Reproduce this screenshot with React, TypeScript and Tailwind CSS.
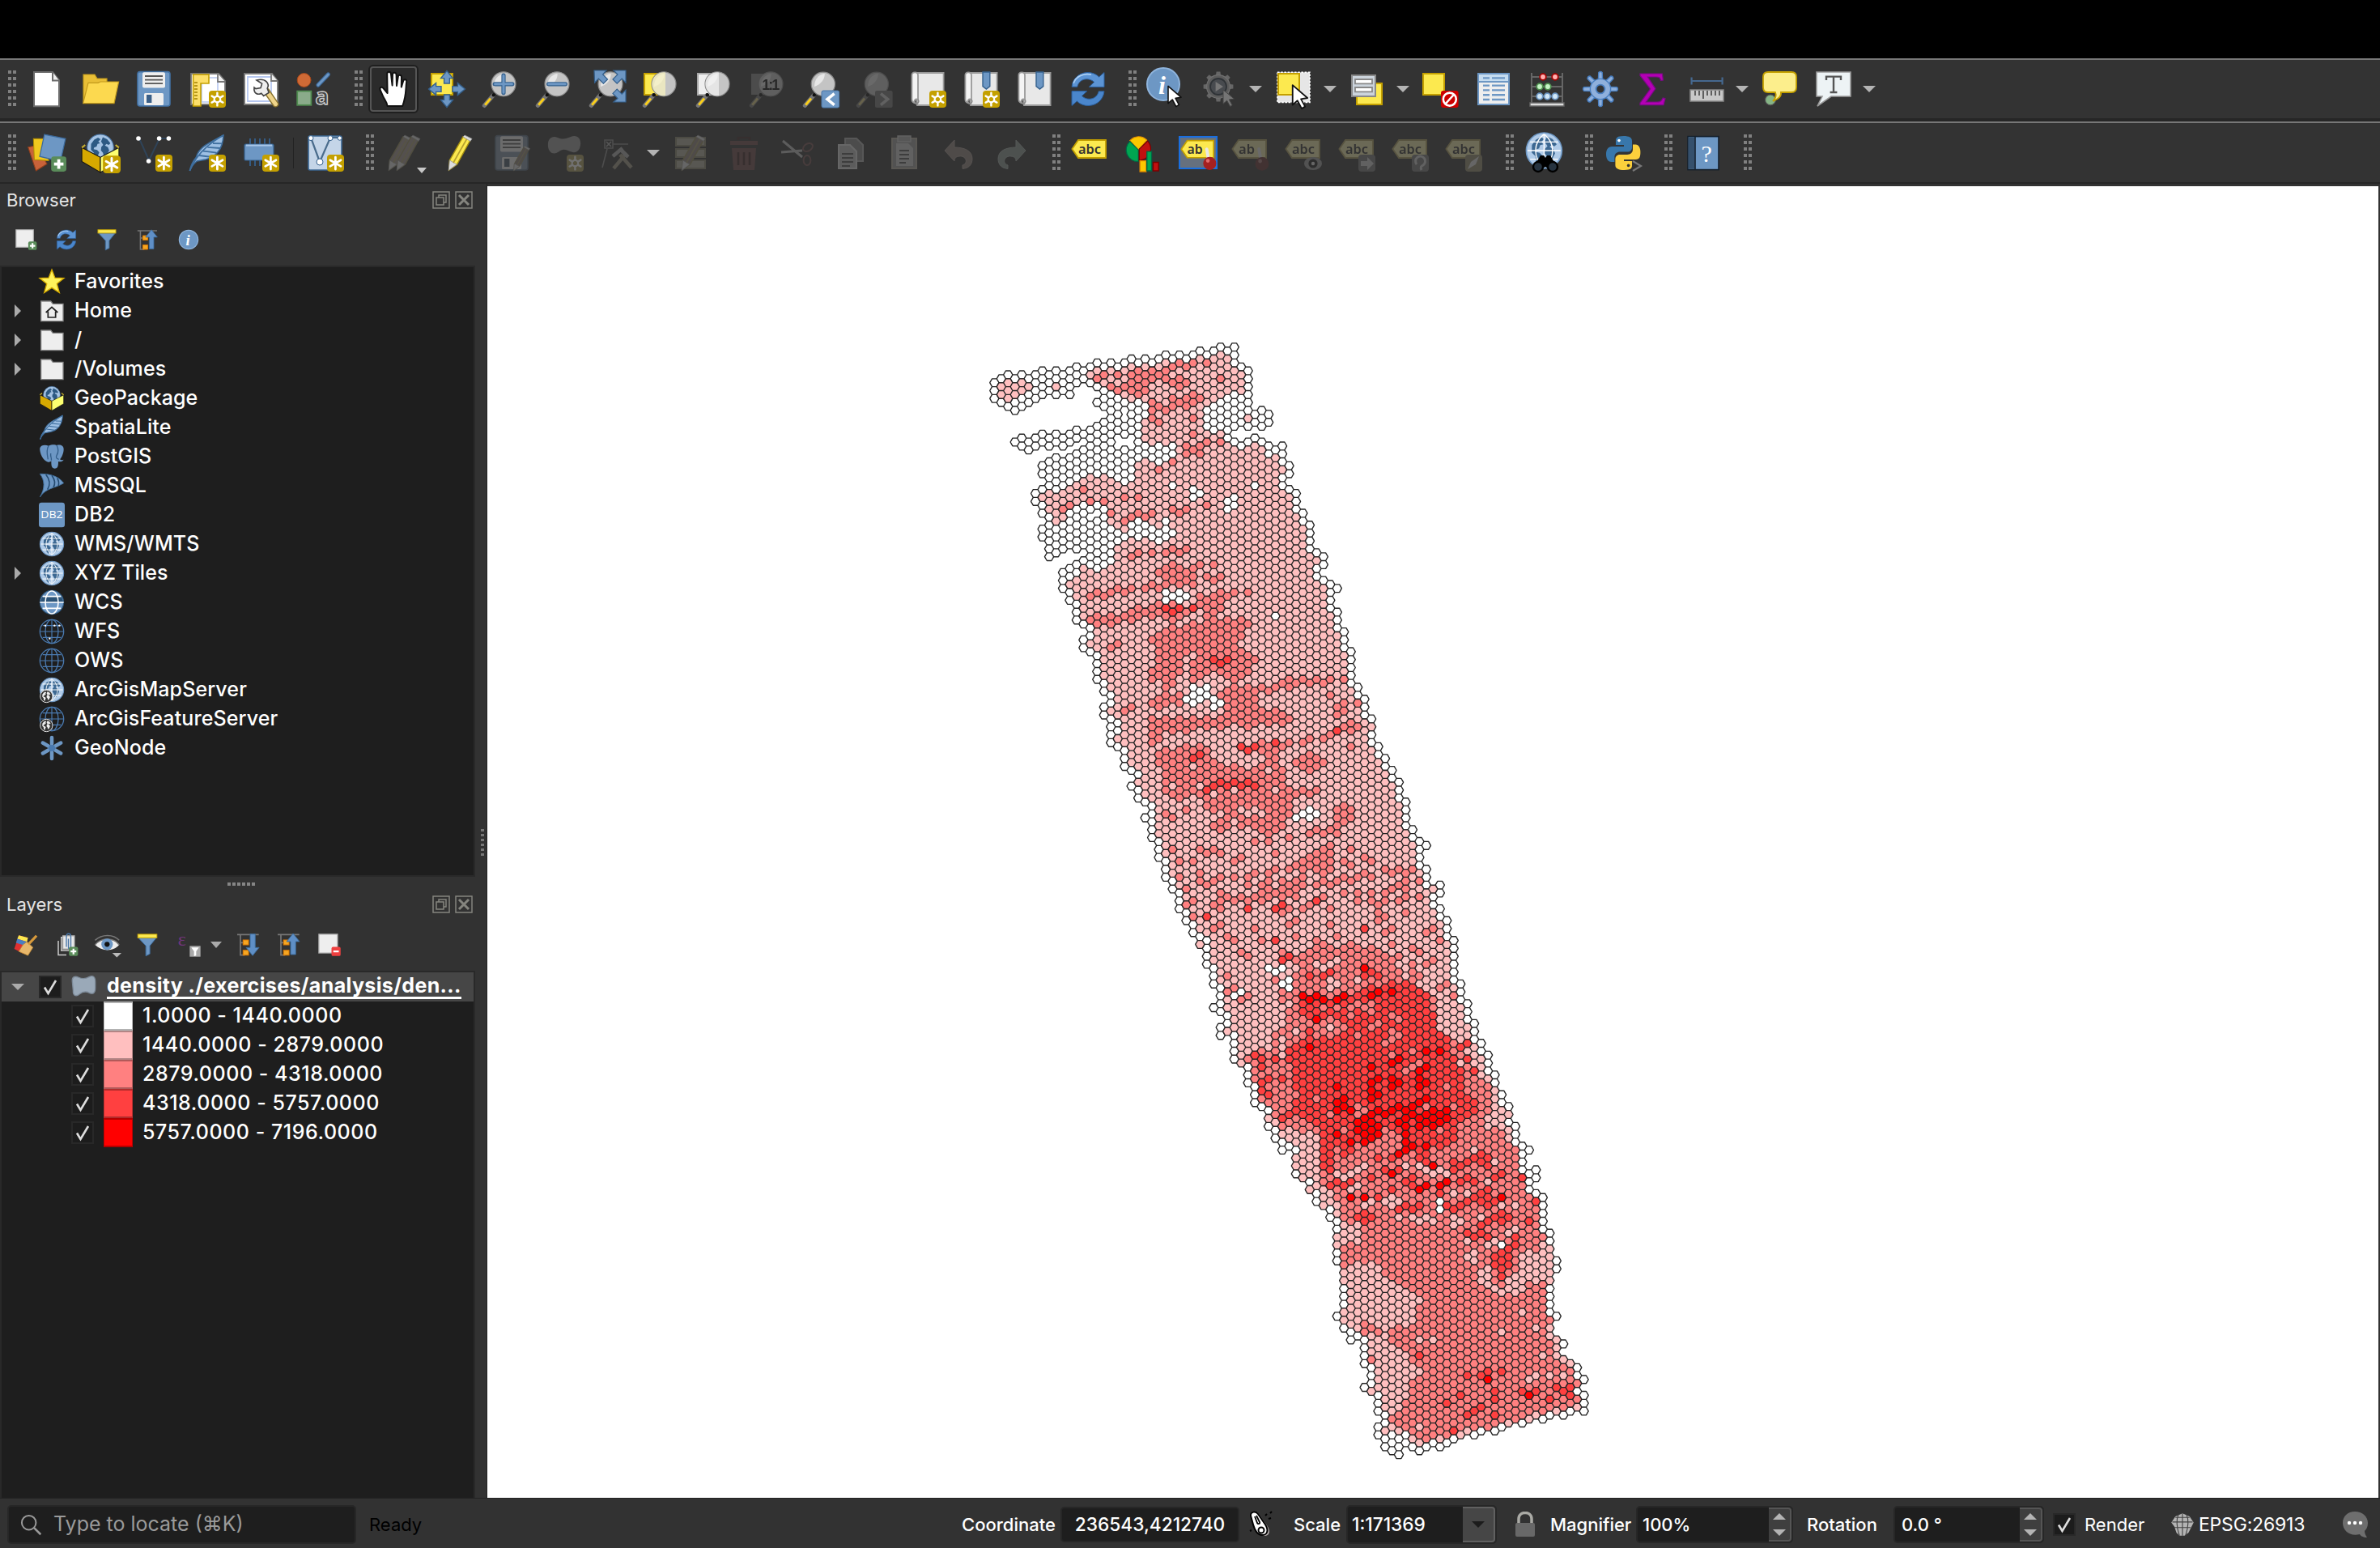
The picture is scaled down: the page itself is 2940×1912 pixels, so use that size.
import React from "react";

/* ------------------------------------------------------------------ */
/* Hexagon density layer                                               */
/* ------------------------------------------------------------------ */

const DX = 8.468;
const DY = 9.771;
const X0 = 1228.33;
const Y0 = 472.7;

type Pt = [number, number];
type Tile = "A" | "B" | "C" | "D";
const ORIGIN: Record<Tile, Pt> = { A: [1200, 400], B: [1300, 850], C: [1480, 1180], D: [1600, 1480] };

const toPage = (t: Tile, x: number, y: number): Pt => [ORIGIN[t][0] + x / 3, ORIGIN[t][1] + y / 3];

/** "x,y x,y" -> page points */
const poly = (t: Tile, s: string): Pt[] =>
  s.trim().split(/\s+/).map((p) => {
    const [x, y] = p.split(",").map(Number);
    return toPage(t, x, y);
  });

const OUTLINE: Pt[] = [
  ...poly("A", `85,218 110,203 138,188 163,203 188,188 213,203 239,188 264,172 290,187 315,172 340,187 365,172 391,157 416,172 442,157 467,143 493,157 518,143 544,157 569,143 594,128 620,143 645,128 670,143 696,128 721,113 747,128 772,113 798,128 823,113 848,99 874,113 899,99 925,84 950,99 975,84 975,113 1001,158 1027,172 1027,290 1052,335 1078,319 1103,334 1103,363 1078,378 1052,363 1027,378 1001,363 975,378 950,393 950,408 975,437 1001,452 1027,437 1052,423 1078,437 1103,452 1128,467 1153,452 1153,481 1153,510 1180,525 1180,554 1155,570 1180,613 1206,628 1206,686 1231,701 1256,745 1256,803 1282,847 1307,862 1307,891 1282,906 1282,935 1307,950 1332,965 1357,979 1332,994 1332,1052 1357,1067 1357,1096 1383,1140 1383,1169 1408,1213 1408,1300`),
  ...poly("B", `1134,-4 1134,25 1159,40 1159,98 1184,113 1184,172 1210,216 1235,260 1235,289 1260,304 1260,333 1286,348 1286,377 1311,421 1311,509 1336,524 1336,553 1361,567 1387,582 1361,597 1361,655 1387,670 1387,699 1412,743 1438,729 1438,758 1412,773 1412,820 1438,817 1438,846 1463,861 1463,919 1488,934`),
  ...poly("C", `948,0 948,60 948,91 974,105 974,163 1000,178 1000,236 1025,251 1025,281 1050,325 1050,354 1076,369 1076,398 1101,442 1101,471 1127,516 1152,560 1152,618 1178,633 1178,691 1203,706 1228,721 1203,735 1203,765 1228,809 1253,794 1253,823 1228,838 1228,867 1253,882 1279,896 1279,1015`),
  ...poly("D", `944,129 944,217 970,232 970,261 944,276 944,421 970,436 944,451 944,510 970,524 995,539 970,554 970,583 995,598 1020,612 1046,627 1046,656 1071,671 1046,686 1046,715 1071,729 1071,788 1046,773 1020,788 995,803 970,788 944,803 919,818 893,803 868,818 843,832 817,818 792,832 767,847 741,862 716,847 690,862 665,876 640,862 614,876 589,891 563,906 538,920 512,906 487,920 461,935 436,920 410,906 384,950 359,935 334,920 334,891 308,876 308,847 334,832 334,803 308,788 308,730 283,715 258,700 283,686 283,627 258,612 258,524 232,510 207,524 207,495 181,480 181,451 156,436 181,421 181,246 156,231 156,114 156,85 130,70`),
  ...poly("C", `500,950 490,941 465,926 440,911 440,882 414,867 414,838 389,823 364,809 364,750 339,706 313,721 313,691 288,677 262,633 262,574 237,560 211,545 211,486 186,471 186,413 160,398 135,384 135,296 110,281 85,296 85,267 110,252 110,222 84,208 59,193 85,178 85,120 59,105 59,47 33,32`),
  ...poly("B", `573,964 548,949 548,920 522,905 548,890 522,875 497,861 497,832 472,817 472,788 497,773 447,744 447,714 421,699 421,641 396,626 396,597 371,553 371,494 345,480 371,465 345,421 320,406 320,377 294,362 320,348 294,304 269,289 269,230 243,216 218,201 218,113 192,98 192,69 218,54 192,11`),
  ...poly("A", `492,1330 467,1315 467,1227 442,1213 416,1198 416,1169 442,1155 442,1125 416,1111 391,1096 391,1037 365,1023 365,994 340,979 340,920 365,906 391,891 416,876 442,862 416,830 391,832 365,818 340,832 315,847 290,862 290,803 264,788 264,759 290,744 290,715 264,701 239,657 239,628 264,613 290,598 264,554 264,525 290,510 315,495 340,505 365,495 391,481 416,467 442,452 416,435 391,437 340,452 315,437 290,452 264,437 239,452 213,467 188,452 163,437 188,423 213,437 239,423 264,408 290,423 315,408 340,423 365,408 391,393 416,408 442,393 467,378 493,363 518,349 493,305 467,291 493,276 467,232 442,218 416,203 391,218 365,262 340,247 315,262 290,247 264,262 239,276 213,291 188,305 163,319 138,305 110,291 85,276`),
];

/** [tile, level, polygon] painted in order over level 1 */
const AREAS: [Tile, number, string][] = [
  ["A", 0, "60,160 428,130 430,230 400,320 60,340"],
  ["A", 0, "430,225 467,225 500,240 540,262 590,285 652,292 655,330 630,350 628,400 620,430 650,440 680,448 755,430 755,490 700,520 640,510 604,530 600,575 570,595 540,580 500,575 467,555 400,585 330,622 230,600 230,480 140,480 140,400 420,380"],
  ["A", 0, "380,690 416,660 450,690 490,680 500,730 520,750 560,770 590,745 620,720 650,735 670,745 720,755 720,715 760,770 710,815 640,790 600,790 550,800 530,825 530,885 480,925 430,920 320,960 320,880 280,880 240,780 250,745 330,740 350,710"],
  ["A", 0, "838,315 900,285 1000,250 1120,300 1120,400 870,400 860,345"],
  ["A", 2, "455,215 480,175 505,180 505,195 470,215"],
  ["A", 2, "560,215 600,170 735,165 735,195 810,205 810,235 740,245 700,215 650,240 635,270 600,255 540,250 505,230 560,235"],
  ["A", 2, "860,1090 950,1080 1040,1095 1010,1160 975,1190 1060,1230 1030,1310 950,1330 900,1300 820,1330 780,1250 770,1300 760,1380 700,1330 640,1310 690,1270 680,1180 640,1160 720,1120 830,1110"],
  ["A", 2, "910,1350 1110,1335 1180,1315 1400,1305 1400,1330 1260,1335 1100,1372 1040,1400 910,1400"],
  ["B", 2, "340,70 400,30 440,0 490,20 490,60 400,80"],
  ["B", 2, "610,0 770,0 770,60 880,100 880,120 820,140 700,145 640,140 560,170 430,165 370,210 360,150 420,100 560,110 640,90"],
  ["B", 2, "360,270 400,230 480,215 570,215 620,280 780,290 770,180 860,190 840,290 870,320 870,365 980,370 1000,390 930,405 890,390 880,480 850,525 800,575 770,530 640,510 650,550 580,530 630,470 570,440 560,390 480,415 420,400 410,300"],
  ["B", 2, "860,280 930,240 1010,240 1010,300 930,315"],
  ["B", 2, "860,205 960,180 1040,165 1110,110 1145,150 1060,175 970,195 870,215"],
  ["B", 2, "1020,450 1130,420 1110,500 1060,540 940,545 960,520 1060,490"],
  ["B", 2, "390,495 430,455 450,485"],
  ["B", 2, "1045,70 1090,50 1090,80 1050,110"],
  ["B", 2, "590,690 700,690 840,665 840,690 690,705 600,725"],
  ["B", 2, "870,670 1040,570 1040,640 1000,670 870,690"],
  ["B", 2, "800,740 930,720 1130,690 1130,715 960,740 860,780 760,790 730,760"],
  ["B", 2, "540,800 600,780 720,760 720,790 600,810"],
  ["B", 2, "880,1000 950,960 1120,960 1320,990 1340,1080 1500,1150 1500,1300 1500,1500 820,1440 760,1360 900,1200"],
  ["C", 2, "300,150 360,130 380,60 600,20 800,60 950,150 960,250 1010,400 1110,520 1200,740 1270,900 1290,1050 500,1050 450,830 300,640 200,480 170,390 230,350 350,290"],
  ["C", 1, "880,70 960,190 1040,300 1040,400 960,330 900,250 860,160 800,80"],
  ["C", 1, "300,640 450,660 450,830 540,930 540,1020 480,1020 360,820"],
  ["C", 1, "1090,480 1160,560 1180,690 1130,700 1120,600 1080,640 1040,650 1070,610"],
  ["C", 3, "320,350 440,300 520,295 600,280 560,250 500,250 480,225 430,240 380,225 370,150 480,160 580,140 720,95 840,110 870,200 900,300 960,390 990,480 1000,530 1030,540 1030,610 960,620 950,690 860,720 880,780 780,760 800,730 760,680 690,640 680,690 590,700 540,750 520,700 500,770 450,780 450,640 380,590 290,610 330,580 380,510 330,460 380,430 330,380"],
  ["D", 2, "170,60 900,20 940,520 1060,640 1080,780 480,900 420,880 340,820 260,550 150,260"],
  ["D", 1, "160,90 235,95 240,165 170,165"],
  ["D", 1, "210,240 330,235 330,280 390,310 400,325 440,340 475,385 440,400 440,460 340,490 290,460 185,420 185,280"],
  ["D", 1, "180,440 240,440 240,510 180,500"],
  ["D", 1, "270,500 335,500 340,530 400,560 430,610 475,630 430,680 400,780 340,810 320,740 290,720 290,620"],
  ["D", 1, "825,200 920,195 930,300 860,310 850,345 810,365 690,345 680,250 705,240 730,280 730,330 760,330 820,280"],
  ["D", 0, "320,860 410,870 410,920 384,960 300,900 300,830"],
];

const DOTS: [Tile, number, string][] = [
  ["A", 1, "110,232-262 138,218-276 163,232-262 188,218-247 213,203-232 315,232 1001,363 1027,349 1052,363 823,1228 798,1257-1300 416,906 670,437 645,423 696,745 645,803 594,803"],
  ["A", 2, "544,188 747,158 772,145 798,158 823,145 874,145 925,203 670,291-350 696,305 696,363 721,320 747,276-305 772,291 798,276-300 823,262-290 848,276 823,350 823,408 874,437 925,437 848,452-481 823,467 798,452-481 747,510 696,540 416,613 442,657 493,657 569,642 620,642 365,672 340,686 518,700 569,730 594,715 620,700 645,715 670,700 747,686 772,700 798,686 874,672 594,862 620,847 670,847 721,847 747,832 772,847 798,832 747,891-965 721,906-965 696,920 772,906-965 798,920-950 823,906 848,891 899,891 823,935-965 874,935 899,950 925,935 696,979 670,965 645,979 594,979 569,994 544,979 518,994 493,1008 467,994 442,1008 848,1008-1052 874,1023-1081 899,1008-1081 925,994-1052 950,1008 975,994 1027,994 442,1096 467,1081-1111 493,1096 518,1081-1111 544,1096 569,1081 594,1067-1096 620,1052-1081 645,1067 670,1052-1081 696,1037-1067 721,1081 747,1096 772,1081 798,1067 747,1037 518,1198 544,1184"],
  ["A", 3, "721,1052 747,1067 772,1052 823,1052 899,1242 925,1257 950,1242"],
  ["A", 0, "721,994 747,1008 772,994 798,1008 721,1023 772,1023 1128,1081 747,598 823,613 823,642 848,628 1052,598 975,642 975,672 950,657 950,686 823,1345 848,1359 874,1345 1078,452 1103,481 1128,481 1001,276-305 721,730 721,759 747,774 1282,906 1256,774"],
  ["B", 1, "752,157 802,157 827,172 624,260 650,275 675,260 701,275 726,289 752,245-275 701,450 776,465 726,465 599,216 650,187 548,187 497,187 802,304"],
  ["B", 2, "269,84 294,69 371,113 1032,25 1108,216 752,567 548,597 573,612 599,597 879,553 1159,626 1083,641 1184,700 1260,685 1286,670 1336,670 1311,743 1184,758 1235,758 548,714 523,729 827,670 497,450 1134,54"],
  ["B", 3, "1057,157 701,216 726,231 752,216 827,201 523,260 548,245 573,377 599,362 624,348 650,362 675,348 701,362 726,348 752,362 574,846 726,817 827,817 852,802 979,788 1159,890 827,934 852,1007 879,993"],
  ["B", 0, "497,40 523,25 523,54 548,11 548,40 573,25 599,40 599,69 624,54 903,480 929,465 954,450 954,480 979,465 802,1037 827,1052 852,1037 852,1096 879,1081 879,1110 675,1140 701,1125 574,935 218,25 243,128 243,157"],
  ["C", 2, "720,369 770,428 796,413 796,354 694,677-706 720,677-706 720,296-325 490,589 516,193 465,193 643,178-207 643,266 592,178 567,193 898,648 923,486 669,252 745,237 770,604 745,310"],
  ["C", 3, "465,779 490,765-794 516,838 490,853 541,853 567,838 643,823 669,750 720,867 770,838 796,853 618,955-985 592,970 643,970 745,941 770,941 796,941 821,926 923,926 948,941 974,926 1000,911 1025,897 1050,911 1076,897 1101,911 1127,956-985 1101,970 1152,970 1050,1000-1029 1076,985 1000,1029 1025,750 1050,735-765 1076,750 1000,765 948,765 974,779 948,794 974,838 1000,823 1025,838 1127,809 1101,823 237,384 288,384 415,76 465,76 490,62 618,76 643,62 669,76 1000,325 1000,384 974,340 313,604"],
  ["C", 4, "618,47 389,149 415,164 440,149 465,164 516,164 541,149 440,237 643,149 669,134 720,134 415,340 847,354 898,354 745,384 720,398 847,413 821,428 643,413 669,457 643,472-530 669,516 720,457-486 745,471 821,457-486 847,471 516,486 541,530 516,545-574 541,560 567,574 847,530 821,545 796,560 745,560 720,574 694,589 669,574 643,589 618,604 770,574-633 745,618 796,574-604 821,604-633 847,589-618 872,574-633 898,589-618 923,574-604 592,618-648 618,633-691 643,618-677 669,633-662 770,662-721 796,706 847,706 745,735 516,662 567,691 872,779 720,809 821,867 847,853 898,853 923,838 567,897 618,897 1127,897"],
  ["C", 1, "516,105 618,779 592,794 567,809 516,809 567,867 618,926 694,911 720,897-926 745,911 872,809 898,794 923,809 847,970 872,985 948,882 948,970-1000 974,985 1000,882 1025,721"],
  ["C", 0, "898,911-941"],
  ["D", 3, "639,129 665,144 690,100-129 716,85 716,144 741,70 767,55-85 792,70 817,144-173 792,188-246 767,202-290 741,217-246 461,583 639,656 690,656 716,642 767,642 614,730 741,715-744 690,773 665,788 639,803 741,803 563,759 589,862 843,715 893,715 970,700 995,715 1020,700-730 944,744"],
  ["D", 4, "716,671 868,730"],
  ["D", 1, "639,158 639,217 665,202-232 741,158 716,173 792,129 817,114 461,524 512,524 767,495 843,421 893,480 919,583 944,656 868,671 893,656 995,656 640,862 614,876 792,832 893,803 970,788 1046,773 461,847 461,906 436,891 334,862"],
  ["D", 0, "767,173"],
];

/** boundary cells that keep a colour instead of the sparse rim */
const RIM: [Tile, number, string][] = [
  ["B", 1, "548,949 522,729 1412,743 1184,143 320,348 345,450"],
  ["C", 1, "110,281 364,750-779 414,867 465,926 262,604 160,398 1101,501 1152,589 389,823"],
  ["D", 1, "156,143-173 181,276-305 181,421-451 207,466 283,715 944,188-217 944,276-305 944,480-510 970,524-583 995,598 1020,612 893,803 868,818 792,832 640,862 614,876 970,788 1046,773 461,906"],
  ["D", 2, "181,246 944,451 716,847 817,818 1046,744 1046,686"],
];

const MISSING = "569,321 569,350 569,438 544,423 544,452 594,423 594,452 442,716 467,702 416,437";

const key = (c: number, r: number) => c * 1000 + r;

function cellAt(px: number, py: number): Pt {
  const c = Math.round((px - X0) / DX);
  const off = Math.abs(c) % 2 ? DY / 2 : 0;
  return [c, Math.round((py - Y0 - off) / DY)];
}

function center(c: number, r: number): Pt {
  return [X0 + c * DX, Y0 + r * DY + (Math.abs(c) % 2 ? DY / 2 : 0)];
}

function inside(p: Pt, pg: Pt[]) {
  let hit = false;
  for (let i = 0, j = pg.length - 1; i < pg.length; j = i++) {
    const [xi, yi] = pg[i];
    const [xj, yj] = pg[j];
    if (yi > p[1] !== yj > p[1] && p[0] < ((xj - xi) * (p[1] - yi)) / (yj - yi) + xi) hit = !hit;
  }
  return hit;
}

function nearEdge(p: Pt, pg: Pt[], d: number) {
  for (let i = 0, j = pg.length - 1; i < pg.length; j = i++) {
    const [ax, ay] = pg[j];
    const [bx, by] = pg[i];
    const l = (bx - ax) ** 2 + (by - ay) ** 2 || 1;
    const t = Math.max(0, Math.min(1, ((p[0] - ax) * (bx - ax) + (p[1] - ay) * (by - ay)) / l));
    if (Math.hypot(p[0] - ax - t * (bx - ax), p[1] - ay - t * (by - ay)) < d) return true;
  }
  return false;
}

function eachDot(t: Tile, s: string, fn: (k: number) => void) {
  for (const item of s.trim().split(/\s+/)) {
    const [xs, ys] = item.split(",");
    const [a, b] = ys.split("-").map(Number);
    for (let y = a; y <= (b ?? a) + 6; y += 29.32) {
      const [px, py] = toPage(t, Number(xs), y);
      const [c, r] = cellAt(px, py);
      fn(key(c, r));
    }
  }
}

function noise(c: number, r: number) {
  const v = Math.sin(c * 12.9898 + r * 78.233) * 43758.5453;
  return v - Math.floor(v);
}

function buildLayer() {
  const cells = new Map<number, number>();
  for (let c = -1; c <= 88; c++) {
    for (let r = -8; r <= 137; r++) {
      const p = center(c, r);
      if (inside(p, OUTLINE) || nearEdge(p, OUTLINE, 1.8)) cells.set(key(c, r), 1);
    }
  }
  eachDot("A", MISSING, (k) => cells.delete(k));
  const areas = AREAS.map(([t, l, s]) => [l, poly(t, s)] as [number, Pt[]]);
  for (const k of cells.keys()) {
    const c = Math.round(k / 1000);
    const r = k - c * 1000;
    const p = center(c, r);
    let level = 1;
    for (const [l, pg] of areas) if (inside(p, pg)) level = l;
    const n = noise(c, r);
    const streak = Math.sin((p[1] + p[0] * 0.22) * 0.36 + Math.sin(p[0] * 0.05) * 1.4);
    if (p[1] > 1045 && p[1] < 1240 && level === 1 && n < 0.16 + 0.3 * streak) level = 2;
    if (p[1] > 1180 && p[1] < 1330 && level === 2 && n > 0.88) level = 1;
    if (p[1] > 1260 && p[1] < 1420 && level === 2 && n < 0.1) level = 3;
    if (p[1] > 1230 && p[1] < 1440 && level === 3 && n > 0.94) level = 2;
    if (p[1] > 1430 && p[1] < 1510 && level === 2) {
      if (n > 0.86) level = 1;
      else if (n < 0.08 + 0.12 * streak) level = 3;
    }
    if (p[1] > 850 && p[1] < 1040 && level === 2 && n > 0.94) level = 1;
    cells.set(k, level);
  }
  for (const [t, l, s] of DOTS) eachDot(t, s, (k) => cells.has(k) && cells.set(k, l));
  for (const k of [...cells.keys()]) {
    const c = Math.round(k / 1000);
    const r = k - c * 1000;
    const o = Math.abs(c) % 2 ? 0 : -1;
    const around = [[c, r - 1], [c, r + 1], [c - 1, r + o], [c - 1, r + o + 1], [c + 1, r + o], [c + 1, r + o + 1]];
    if (around.some(([a, b]) => !cells.has(key(a, b)))) cells.set(k, 0);
  }
  for (const [t, l, s] of RIM) eachDot(t, s, (k) => cells.has(k) && cells.set(k, l));
  const paths = ["", "", "", "", ""];
  const R = DY / Math.sqrt(3);
  for (const [k, l] of cells) {
    const c = Math.round(k / 1000);
    const [x, y] = center(c, k - c * 1000);
    const pts = [[x - R, y], [x - R / 2, y - DY / 2], [x + R / 2, y - DY / 2], [x + R, y], [x + R / 2, y + DY / 2], [x - R / 2, y + DY / 2]];
    paths[l] += "M" + pts.map((q) => q[0].toFixed(1) + " " + q[1].toFixed(1)).join("L") + "Z";
  }
  return paths;
}

const LEVELS = ["#ffffff", "#ffbfbf", "#ff8080", "#ff4040", "#ff0000"];
const LAYER = buildLayer();

function MapCanvas() {
  return (
    <svg className="block h-[1620px] w-[2336px]" viewBox="602 230 2336 1620">
      {LAYER.map((d, i) => (
        <path key={i} d={d} fill={LEVELS[i]} stroke="#232323" strokeWidth="1.35" strokeLinejoin="bevel" />
      ))}
    </svg>
  );
}

/* ------------------------------------------------------------------ */
/* Icons                                                               */
/* ------------------------------------------------------------------ */

type IP = { size?: number; dim?: boolean; children?: React.ReactNode };
const I = ({ size = 48, dim, children }: IP) => (
  <svg width={size} height={size} viewBox="0 0 24 24" fill="none" className={dim ? "block shrink-0 overflow-visible opacity-30 grayscale-[60%]" : "block shrink-0 overflow-visible"}>
    {children}
  </svg>
);

const Star = () => (
  <g>
    <rect x="13" y="13" width="10.5" height="10.5" rx="2" fill="#c4a000" />
    <path d="M18.2 14.6v7.4M14.9 16.4l6.6 3.8M14.9 20.2l6.6-3.8" stroke="#fff" strokeWidth="1.4" strokeLinecap="round" />
  </g>
);
const SunStar = () => (
  <g>
    <rect x="13" y="13" width="10.5" height="10.5" rx="2" fill="#c4a000" />
    <circle cx="18.2" cy="18.3" r="1.9" stroke="#fff" strokeWidth="1.1" />
    <path d="M18.2 14.3v2M18.2 20.2v2M14.8 16.3l1.8 1M19.9 19.3l1.8 1M14.8 20.3l1.8-1M19.9 17.3l1.8-1" stroke="#fff" strokeWidth="1.2" strokeLinecap="round" />
  </g>
);
const Cursor = ({ x = 0, y = 0 }: { x?: number; y?: number }) => (
  <path transform={`translate(${x} ${y})`} d="M12.5 10.5v10.6l2.6-2.3 2.3 4.3 1.8-1.1-2.2-4 3.5-.6z" fill="#fff" stroke="#111" strokeWidth=".8" strokeLinejoin="round" />
);
const Lens = ({ small }: { small?: boolean }) => (
  <g>
    <path d="M2.2 22.2 7.6 15.9" stroke="#777" strokeWidth="2.6" strokeLinecap="round" />
    <path d="M2.6 21.8 6 17.8" stroke="#fcd018" strokeWidth="1.5" />
    <circle cx="7.9" cy="15.6" r="1.1" fill="#111" />
    {small ? <circle cx="13.4" cy="8.9" r="7.3" fill="#c4c4c4" stroke="#8a8a8a" strokeWidth=".6" /> : <circle cx="14" cy="8.9" r="7.5" fill="#c4c4c4" stroke="#8a8a8a" strokeWidth=".6" />}
    <path d="M8 10.5c0-4.5 2.6-7.5 6.3-8 .4 3.5-2.8 7-6.3 8z" fill="#fff" opacity=".6" />
  </g>
);
const Land = ({ c = "#2d5a84" }: { c?: string }) => (
  <path d="M4.5 8.5 7 5.2l3-1.6 2 1.3-1.8 1.7 1.4 1.5-2 .5-.7 2-2 .8-.4 1.3 2.8.7 1.7 1.8-1.2 2.8-1 3-1.7-2-.4-3.5-2.3-2.3zM13.8 3.3l3.4 1.6 2.6 3.2-1.4 1.3-1.7-.9-1.3 1.3 2.4 1.3 1 2.6-2.4 4.6-1.7.6-.8-3.4-1.6-1.8.3-2.8 1.5-1.6-1.7-2.7z" fill={c} />
);
const Mesh = ({ c = "#fff", w = 0.7 }: { c?: string; w?: number }) => (
  <path d="M12 1.8v20.4M1.8 12h20.4M3.4 6.7h17.2M3.4 17.3h17.2M12 1.8c-7 5.6-7 14.8 0 20.4M12 1.8c7 5.6 7 14.8 0 20.4" stroke={c} strokeWidth={w} />
);
const Globe = ({ mesh = true }: { mesh?: boolean }) => (
  <g>
    <circle cx="12" cy="12" r="11" fill="#b0cbe8" stroke="#6d97c4" strokeWidth=".8" />
    <Land c="#3c6892" />
    {mesh && <Mesh />}
  </g>
);
const Box = () => (
  <g>
    <circle cx="12" cy="8.8" r="7.8" fill="#a6c4e4" stroke="#4a77a8" strokeWidth=".5" />
    <g transform="translate(3.1 .2) scale(.75)"><Land c="#2d5a84" /></g>
    <path d="M1 8.8 12 14.5V23.5L1 17z" fill="#d6a900" stroke="#111" strokeWidth=".5" />
    <path d="M23 8.8 12 14.5V23.5L23 17z" fill="#fcff70" stroke="#111" strokeWidth=".5" />
    <path d="M1 8.8l2-1.6M23 8.8l-2-1.6" stroke="#c8b030" strokeWidth="1" />
  </g>
);
const Feather = () => (
  <g>
    <path d="M1.2 23c.6-3.2 2-6 4-8.4C7 8 13.5 5.6 22 1c-.3 8.4-4.6 14-12 15.2l-4.4.8C3.6 18.6 2 20.7 1.2 23z" fill="#9dbfe3" stroke="#3a6896" strokeWidth=".8" />
    <path d="M1.2 23C5 13 13 6 22 1M7 13.5l8 1M9.5 10.8l8.2 1M12.2 8.4l7.8.6M15.5 6l6 .2" stroke="#3f6f9f" strokeWidth=".9" />
  </g>
);
const Sheet = () => <path d="M4 1.5h11.5l4 5V22.6H4z" fill="#fff" stroke="#6b6b6b" strokeWidth="1" />;
const Fold = () => <path d="M15.5 1.5v5.2h4" fill="#eee" stroke="#6b6b6b" strokeWidth="1" />;
const Refresh = () => (
  <g stroke="#2a5f9e" strokeWidth=".5" strokeLinejoin="round">
    <path d="M2 10.6C2.6 4.6 8 1 13.6 1.9c2.2.4 3.9 1.3 5.2 2.6L22 1.8v8.9h-9.4l3.2-3C12.5 4.6 6.6 5.4 5.4 10.6z" fill="#5c94d4" />
    <path d="M22 13.4C21.4 19.4 16 23 10.4 22.1c-2.2-.4-3.9-1.3-5.2-2.6L2 22.2v-8.9h9.4l-3.2 3c3.3 3.1 9.2 2.3 10.4-2.9z" fill="#4a86cc" />
    <path d="M3 8.5C4.5 4 9.5 2 14 3.1" stroke="#a9cdf2" strokeWidth=".9" fill="none" />
  </g>
);
const Scroll = ({ mark }: { mark?: boolean }) => (
  <g>
    <path d="M3.5 2h18.3v20H5.5z" fill="#e8e8e8" stroke="#999" strokeWidth=".9" />
    <path d="M2.2 3.5c0-2.4 3.8-2.4 3.8 0v15c-1.6-.8-3 .8-1.8 2.2-1.2-.2-2-1-2-2.4z" fill="#f4f4f4" stroke="#999" strokeWidth=".9" />
    <path d="M4.2 20.7c1.8.8 2.6-1 1.8-2.2" stroke="#888" strokeWidth=".9" />
    {mark && <path d="M13 1.5h4.4v8.8L15.2 12 13 10.3z" fill="#6d97c4" stroke="#35618e" strokeWidth=".7" />}
  </g>
);
const Floppy = () => (
  <g>
    <rect x="2" y="1.3" width="20" height="21.2" rx="1.5" fill="#6d97c4" stroke="#4272a5" strokeWidth=".8" />
    <rect x="5" y="1.6" width="14" height="9.6" rx="1" fill="#eee" />
    <path d="M6.500 4h11M6.500 6.300h11M6.500 8.600h11" stroke="#555" strokeWidth=".9" />
    <rect x="6" y="14.5" width="12" height="7.5" rx=".8" fill="#eee" />
    <rect x="7.5" y="15.5" width="3.2" height="5" fill="#3a5f88" />
  </g>
);
const Pencil = ({ c = "#fce94f" }: { c?: string }) => (
  <g>
    <path d="M15 2l4.500 2-8.200 15-5 3.500.4-6z" fill={c} stroke="#a58f10" strokeWidth=".7" />
    <path d="M15 2l1-1 4.500 2.200-1 1.500zM6.700 16.500l-.6 6.200 5-3.700z" fill="#ddd" stroke="#999" strokeWidth=".4" />
    <path d="M17.200 3.500 9 18" stroke="#b5a030" strokeWidth=".8" />
  </g>
);
const Tag = ({ t = "abc" }: { t?: string }) => (
  <g>
    <path d="M1.200 9.500 5 4h17v11H5z" fill="#fce94f" stroke="#c4a000" strokeWidth=".9" />
    <text x="5" y="12.3" fontSize="8.2" fontWeight="600" fontFamily="Noto Sans, sans-serif" fill="#333" textLength={t.length > 2 ? 14 : 10} lengthAdjust="spacingAndGlyphs">{t}</text>
  </g>
);
const Pin = () => (
  <g>
    <path d="M17.600 9.500l1 6" stroke="#e8e8e8" strokeWidth="2" strokeLinecap="round" />
    <circle cx="19.5" cy="18.7" r="4.2" fill="#a52020" />
    <circle cx="18.3" cy="17" r="1.2" fill="#e26a6a" />
  </g>
);
const Funnel = () => (
  <g>
    <path d="M3 5h18l-6.500 8v8l-4 2v-10z" fill="#6d97c4" stroke="#3b6a9a" strokeWidth=".8" />
    <rect x="2.5" y="1.5" width="19" height="3.6" fill="#fce94f" stroke="#c4a000" strokeWidth=".7" />
  </g>
);
const Tree = ({ up }: { up?: boolean }) => (
  <g>
    <path d="M1.500 2.500h20M4.500 2.500v19h4M4.500 10h4" stroke="#777" strokeWidth="1.300" />
    <path d="M7 7.500h5v4.500H7zM7 17h5v4.500H7z" fill="#f5a623" stroke="#e07b00" strokeWidth=".8" />
    {up ? <path d="M13.500 21V9h-3.700l6-7.500 6 7.500h-3.600v12z" fill="#5f8fc6" stroke="#3b6a9a" strokeWidth=".7" /> : <path d="M13.500 2v12.500h-3.700l6 7.500 6-7.500h-3.600V2z" fill="#5f8fc6" stroke="#3b6a9a" strokeWidth=".7" />}
  </g>
);
const Info = () => (
  <g>
    <circle cx="12" cy="12" r="10" fill="#6d97c4" stroke="#8fb4dc" strokeWidth="1" />
    <text x="9" y="17.8" fontSize="16" fontStyle="italic" fontWeight="700" fontFamily="Liberation Serif, serif" fill="#fff">i</text>
  </g>
);
const SPOKES = [0, 45, 90, 135, 180, 225, 270, 315];
const Gear = () => (
  <g>
    {SPOKES.map((a) => (
      <path key={a} transform={`rotate(${a} 12 12)`} d="M10.700 6.500 10.900 1.800q1.100-1 2.200 0l.2 4.700z" fill="#8fb0dc" stroke="#4a7fc0" strokeWidth=".7" />
    ))}
    <circle cx="12" cy="12" r="6.3" fill="#8fb0dc" stroke="#4a7fc0" strokeWidth=".7" />
    <circle cx="12" cy="12" r="2.7" fill="#333" stroke="#4a7fc0" strokeWidth=".9" />
  </g>
);
const RunGear = () => (
  <g>
    {SPOKES.map((a) => (
      <path key={a} transform={`rotate(${a} 11.500 10.500)`} d="M9.900 4 10.300 1.300h2.400l.4 2.700z" fill="#666" />
    ))}
    <circle cx="11.5" cy="10.5" r="7.2" fill="#5c5c5c" stroke="#707070" strokeWidth=".6" />
    <circle cx="11.5" cy="10.5" r="5" fill="#484b4f" stroke="#2f3337" strokeWidth=".9" />
    <path d="M9.800 7.500 14.500 10.500l-4.700 3z" fill="#777" />
    <path d="M14.500 12.500v8.600l2.300-2 2 3.600 1.300-.7-1.900-3.500 3-.5z" fill="#757575" stroke="#444" strokeWidth=".5" />
  </g>
);
const Arrow4 = () => (
  <>{[0, 90, 180, 270].map((a) => (
    <path key={a} transform={`rotate(${a} 12 12)`} d="M12 .8l3.700 4.500h-2V8.500h-3.400V5.300h-2z" fill="#6d97c4" stroke="#35618e" strokeWidth=".7" />
  ))}</>
);
const PlusBadge = () => (
  <g>
    <rect x="14.5" y="14" width="9" height="9" rx="1.6" fill="#5a8c5a" />
    <path d="M19 15.700v5.600M16.200 18.500h5.600" stroke="#fff" strokeWidth="1.800" />
  </g>
);

function Tool({ children, dim, size }: { children: React.ReactNode; dim?: boolean; size?: number }) {
  return (
    <div className="flex h-full w-[66px] shrink-0 items-center justify-center">
      <I dim={dim} size={size}>{children}</I>
    </div>
  );
}

const GRIP_ROWS = [0, 1, 2, 3, 4, 5];
function Grip({ className }: { className: string }) {
  return (
    <div className={"flex h-full shrink-0 items-center " + className}>
      <div className="grid grid-cols-2 gap-[2px]">
        {GRIP_ROWS.map((i) => (
          <React.Fragment key={i}>
            <span className="mb-[2px] h-[4px] w-[4px] bg-[#808080]" />
            <span className="mb-[2px] h-[4px] w-[4px] bg-[#808080]" />
          </React.Fragment>
        ))}
      </div>
    </div>
  );
}

function Drop({ className = "w-[24px]" }: { className?: string }) {
  return (
    <div className={"flex h-full shrink-0 items-center pl-[2px] " + className}>
      <span className="h-0 w-0 border-x-[8px] border-t-[8px] border-x-transparent border-t-[#b4b4b4]" />
    </div>
  );
}

function ToolbarTop() {
  return (
    <div className="flex h-[78px] border-t-2 border-b-4 border-t-[#777] border-b-[#262626] bg-[#333]">
      <Grip className="w-[25px] pl-[10px]" />
      <Tool><Sheet /><Fold /></Tool>
      <Tool>
        <path d="M1.500 20V3h7l1.500 2.500h6V9" fill="#e9bf36" stroke="#c29a1c" strokeWidth=".6" />
        <path d="M4.500 8.200h6L12 7.500h11.300L20.500 20.800H1.300z" fill="#fcd94f" stroke="#c29a1c" strokeWidth=".6" />
      </Tool>
      <Tool><Floppy /></Tool>
      <Tool>
        <path d="M2 2.500h17l4 4.500V21.500H2z" fill="#fff" stroke="#777" strokeWidth=".9" />
        <path d="M8.500 5h10v15h-10z" stroke="#b7c8f0" strokeWidth=".8" />
        <path d="M3.300 3H13v5.500H8V22.500H3.300z" fill="#fcdf6a" stroke="#c4a000" strokeWidth=".8" />
        <path d="M4 8h2M4 10h2M4 12h2M4 14h2M4 16h2M4 18h2" stroke="#a08000" strokeWidth=".7" />
        <path d="M18.500 2.500v5H23" stroke="#777" fill="#eee" strokeWidth=".9" />
        <SunStar />
      </Tool>
      <Tool>
        <path d="M2 2.500h17l3.500 4.500V21.500H2z" fill="#fff" stroke="#777" strokeWidth=".9" />
        <path d="M4 4.500h14.500v15H4z" stroke="#b7c8f0" strokeWidth=".9" />
        <path d="M18.500 2.500V7h4" stroke="#777" fill="#eee" strokeWidth=".9" />
        <path d="M13.800 13.500l3-1.500 6 8.800c.6 1.500-1.500 2.800-2.700 1.700z" fill="#efd48a" stroke="#8a7430" strokeWidth=".7" />
        <path d="M9.500 6.500l3.300 2.200-.8 2.600-3 .5-1-.8c-.5 4 2.500 4.800 4.400 3.600l1.400 1.600 3.300-2-1-2.600c1.600-2.800-.8-6.600-6.600-5.100z" fill="#eee" stroke="#444" strokeWidth=".8" />
      </Tool>
      <Tool>
        <circle cx="5.8" cy="6.5" r="4.2" fill="#cf6a36" stroke="#a8481a" strokeWidth=".5" />
        <path d="M14.500 9.500 20.700 3" stroke="#3d6c9f" strokeWidth="2.600" strokeLinecap="round" />
        <path d="M14.500 9.500 20.700 3" stroke="#6d97c4" strokeWidth="1.400" strokeLinecap="round" />
        <rect x="1.6" y="13.3" width="8.6" height="8.6" fill="#8aab8a" stroke="#4f8a4f" strokeWidth=".9" />
        <text x="12.8" y="21.4" fontSize="14" fontFamily="Noto Sans, sans-serif" fontWeight="700" fill="#444" stroke="#ccc" strokeWidth=".7">a</text>
      </Tool>
      <Grip className="w-[32px] pl-[17px]" />
      <div className="flex h-full w-[66px] shrink-0 items-center justify-center">
        <div className="flex h-[60px] w-[62px] items-center justify-center rounded-[6px] border-2 border-[#1f1f1f] bg-[#2b2b2b]">
          <div className="flex h-[56px] w-[58px] items-center justify-center rounded-[4px] border-2 border-[#555]">
            <I>
              <path d="M7.500 22.500c-.3-2.500-1.800-4-2.800-6.200L3 12.500c-.6-1.500 1-2.200 2-1l2.500 3L7.300 2.700C7.300 1 9.500 1 9.700 2.700l.8 7 .2-6.800c.1-1.500 2.200-1.400 2.300.1l.2 7 .9-5.700c.2-1.400 2.100-1.200 2.100.2l-.1 6.300 1.200-4c.4-1.200 2.200-.8 2 .6-.7 4.300.2 8-2.500 15.100z" transform="translate(.8 0)" fill="#fff" stroke="#111" strokeWidth="1" strokeLinejoin="round" />
            </I>
          </div>
        </div>
      </div>
      <Tool><path d="M2.500 2.500h13v13h-13z" fill="#fce94f" stroke="#c4a000" /><Arrow4 /></Tool>
      <Tool><Lens /><path d="M14 3.500v10.800M8.600 8.900h10.800" stroke="#35618e" strokeWidth="2.600" strokeLinecap="round" /><path d="M14 3.700v10.400M8.800 8.900h10.400" stroke="#6d97c4" strokeWidth="1.500" strokeLinecap="round" /></Tool>
      <Tool><Lens /><path d="M8.800 8.900h10.400" stroke="#35618e" strokeWidth="2.600" strokeLinecap="round" /><path d="M8.900 8.900h10.200" stroke="#6d97c4" strokeWidth="1.500" strokeLinecap="round" /></Tool>
      <Tool>
        <Lens />
        <path d="M4 .5h7.500L9.300 3l3 3-2.600 2.600-3-3L4.300 8zM23.500.5V8l-2.400-2.400-3 3L15.500 6l3-3L16 .5zM23.500 20H16l2.500-2.300-3-3 2.600-2.600 3 3 2.400-2.500z" fill="#6d97c4" stroke="#35618e" strokeWidth=".6" />
      </Tool>
      <Tool><path d="M2 2.500h13v13H2z" fill="#fce94f" stroke="#c4a000" /><Lens /><path d="M6.700 8.900a7.300 7.300 0 0 1 8.300-7.200v14.400a7.300 7.300 0 0 1-8.300-7.200z" fill="#f7f2c0" opacity=".75" /></Tool>
      <Tool><path d="M2 2.500h13v13H2z" fill="#eee" stroke="#aaa" /><Lens /><path d="M6.700 8.900a7.300 7.300 0 0 1 8.300-7.200v14.400a7.300 7.300 0 0 1-8.300-7.200z" fill="#f4f4f4" opacity=".7" /></Tool>
      <Tool dim><path d="M2 2.500h13v13H2z" fill="#888" /><Lens /><text x="8.6" y="12.5" fontSize="9" fontWeight="700" fontFamily="Liberation Sans, sans-serif" fill="#111" textLength="11">1:1</text></Tool>
      <Tool><Lens small /><rect x="12.5" y="13" width="10.8" height="10.5" rx="1" fill="#6d97c4" stroke="#4a77a8" strokeWidth=".5" /><path d="M20.300 14.800 16 18.300l4.300 3.500" stroke="#fff" strokeWidth="1.800" /></Tool>
      <Tool dim><Lens small /><rect x="12.5" y="13" width="10.8" height="10.5" rx="1" fill="#777" /><path d="M16 14.800l4.300 3.500-4.300 3.500" stroke="#ccc" strokeWidth="1.800" /></Tool>
      <Tool><Scroll /><SunStar /></Tool>
      <Tool><Scroll mark /><SunStar /></Tool>
      <Tool><Scroll mark /></Tool>
      <Tool><Refresh /></Tool>
      <Grip className="w-[30px] pl-[17px]" />
      <Tool><g transform="translate(-1.500 -3)"><Info /></g><g transform="translate(1 -.3)"><Cursor /></g></Tool>
      <Tool><RunGear /></Tool>
      <Drop className="ml-[2px] w-[26px]" />
      <Tool><rect x="1" y="1.7" width="20" height="18.5" fill="#e6e6e6" stroke="#fff" strokeWidth=".8" strokeDasharray="1.3 .8" /><path d="M1.500 2.500h13v13h-13z" fill="#fce94f" stroke="#c4a000" /><g transform="translate(-4 -2.500) scale(1.150)"><Cursor /></g></Tool>
      <Drop />
      <Tool><path d="M5 8.500h15.500v13H5z" fill="#fce94f" stroke="#c4a000" /><path d="M2 3.500h14.500v13H2z" fill="#ccd4dc" stroke="#888" /><path d="M4 6h10.500v2.700H4zM4 11h10.500v2.700H4z" fill="#fff" stroke="#888" strokeWidth=".9" /></Tool>
      <Drop className="w-[23px]" />
      <Tool><path d="M1.500 2.500h13v13h-13z" fill="#fce94f" stroke="#c4a000" /><rect x="12.5" y="13" width="10.8" height="10.5" rx="1.5" fill="#cc0000" /><circle cx="17.9" cy="18.3" r="4" stroke="#fff" strokeWidth="1.3" fill="#cc0000" /><path d="M15.400 21l5-5.500" stroke="#fff" strokeWidth="1.300" /></Tool>
      <Tool><rect x="2.5" y="2.5" width="19" height="19" fill="#eee" stroke="#6d97c4" /><path d="M3 3h18v4H3z" fill="#c5dcf0" /><path d="M2.500 7.500h19" stroke="#6d97c4" /><path d="M5.500 5.200h4M11 5.200h8M5.500 9.800h4M11 9.800h8M5.500 12.700h4M11 12.700h8M5.500 15.600h4M11 15.600h8M5.500 18.500h4M11 18.500h8" stroke="#6d97c4" strokeWidth="1.200" /></Tool>
      <Tool>
        <path d="M2.500 2v20M21.500 2v20M2.500 4.500h19M2.500 10.500h19M2.500 16.500h19" stroke="#666" strokeWidth="1" />
        <g stroke="#a40000" fill="#ffb0b0" strokeWidth=".9"><circle cx="9.5" cy="4.5" r="1.9" /><circle cx="17" cy="4.5" r="1.9" /></g>
        <g stroke="#4f8f4f" fill="#c6f5c6" strokeWidth=".9"><circle cx="7.5" cy="10.5" r="1.9" /><circle cx="12.5" cy="10.5" r="1.9" /></g>
        <g stroke="#6d97c4" fill="#d2e8f8" strokeWidth=".9"><circle cx="7.5" cy="16.5" r="1.9" /><circle cx="12.2" cy="16.5" r="1.9" /><circle cx="17" cy="16.5" r="1.9" /></g>
        <path d="M1.500 20.500h21v2h-21z" fill="#ddd" stroke="#666" strokeWidth=".7" />
      </Tool>
      <Tool><Gear /></Tool>
      <Tool><path d="M3.500 2.500h13.700l.5 4-1.400.2c-.5-1.800-1-2.200-3-2.200H8.200l4.800 7.300-5.800 8.200h6.500c2.300 0 3-.6 3.900-2.500l1.400.3-1 4H3.500v-1.200l6.300-8.700L3.500 3.700z" fill="#b400b4" stroke="#7a0a86" strokeWidth=".6" /></Tool>
      <Tool><path d="M2.500 7h18.500M2.300 4.800v4.400M21.300 4.800v4.400" stroke="#45688f" strokeWidth="1.100" /><path d="M1.500 12.500h20.500v7H1.500z" fill="#c8c8c8" stroke="#888" strokeWidth=".8" /><path d="M4.500 13v3M7 13v3M9.500 13v5M12 13v3M14.500 13v3M17 13v3M19.500 13v3" stroke="#444" strokeWidth=".8" /></Tool>
      <Drop />
      <Tool><circle cx="6" cy="18.7" r="3.2" fill="#86b586" stroke="#555" strokeWidth=".6" /><path d="M4.500 1.500h14.500q3 0 3 3v6.500q0 3-3 3h-6.500c.3 2.700-1.500 4-5 5.500 1.800-2 2.400-3.500 1.500-5.500h-4.500q-3 0-3-3V4.500q0-3 3-3z" fill="#fcee8c" stroke="#c4a000" strokeWidth=".9" /></Tool>
      <Tool><path d="M1.500 1.500h21v15H10.500L2 22.500l3-6H1.500z" fill="#edf3f5" stroke="#999" strokeWidth=".8" /><path d="M7.500 6.500V4.300h9v2.200M12 4.300v9.500M9.800 14h4.400" stroke="#555" strokeWidth="1.200" /></Tool>
      <Drop className="ml-[1px] w-[24px]" />
    </div>
  );
}

function ToolbarEdit() {
  return (
    <div className="flex h-[77px] border-t-2 border-b-2 border-t-[#777] border-b-[#262626] bg-[#333]">
      <Grip className="w-[25px] pl-[10px]" />
      <Tool size={50}><path d="M.8 8.500 6 7.500l6 11-6.500 4z" fill="#c8623a" stroke="#8f3f1c" strokeWidth=".5" /><path d="M4 3.500h8l1 13-8.500-.5z" fill="#f0c81e" stroke="#b08d00" strokeWidth=".5" /><path d="M10.500 1 23 3.500 20 17 7.700 14z" fill="#6d97c4" stroke="#3c6a9c" strokeWidth=".6" /><PlusBadge /></Tool>
      <Tool size={50}><Box /><g transform="translate(.5 .5)"><Star /></g></Tool>
      <Tool><path d="M3 3 9 16.500 15.500 3H21" stroke="#2f4358" strokeWidth="1" /><g fill="#fff"><circle cx="2.5" cy="3" r="1.4" /><circle cx="15.3" cy="3" r="1.4" /><circle cx="21.2" cy="3" r="1.4" /><circle cx="8.8" cy="17" r="1.4" /></g><Star /></Tool>
      <Tool><Feather /><Star /></Tool>
      <Tool><path d="M5.500 3v5M8.500 3v5M11.500 3v5M14.500 3v5M17.500 3v5M5.500 15v5M8.500 15v5M11.500 15v5" stroke="#35618e" strokeWidth=".9" /><rect x="2" y="6.5" width="18" height="10" rx=".8" fill="#6d97c4" stroke="#35618e" strokeWidth=".6" /><path d="M3 7.300h16" stroke="#a9c7e8" strokeWidth="1" /><Star /></Tool>
      <div className="flex w-[14px] items-center pl-[7px]"><div className="h-[38px] w-[1px] bg-[#222]" /></div>
      <Tool><rect x="1.5" y="1.5" width="20.5" height="21" rx="1" fill="#c4d5e8" stroke="#3d6894" strokeWidth=".8" /><path d="M3 2.500 8.500 17.500 15 2.500h6.500" stroke="#4a6c8c" strokeWidth="1.100" /><g fill="#fff" stroke="#35618e" strokeWidth=".5"><circle cx="3" cy="2.8" r="1.5" /><circle cx="15" cy="2.8" r="1.5" /><circle cx="20.8" cy="2.8" r="1.3" /><circle cx="8.5" cy="17.5" r="2" /></g><Star /></Tool>
      <Grip className="w-[32px] pl-[17px]" />
      <div className="flex h-full w-[66px] shrink-0 items-center justify-center">
        <I dim><g transform="translate(-3 0)"><Pencil c="#b09080" /></g><g transform="translate(2 0)"><Pencil c="#b09080" /></g></I>
        <span className="-ml-[7px] mt-[44px] h-0 w-0 border-x-[6px] border-t-[7px] border-x-transparent border-t-[#c8c8c8]" />
      </div>
      <Tool><Pencil /></Tool>
      <Tool dim><Floppy /><g transform="translate(9 7) scale(.7)"><Pencil c="#a08070" /></g></Tool>
      <Tool dim><path d="M1.500 8C1 3 4 1 7.500 2.500c3.500 1.500 5 .5 8-.5 4-1.500 6.500 1 6 5s-3 5.500-6.500 4-4.500-1.500-7 .3C5 13.300 2 12 1.500 8z" fill="#9a9a9a" /><SunStar /></Tool>
      <Tool dim><path d="M3.500 4h5v5h-5zM8.500 6.500H18M5 9.500 2 21" stroke="#888" strokeWidth=".8" /><path d="M4.500 5l3 3M7.500 5l-3 3" stroke="#aaa" strokeWidth=".8" /><path d="M9 21.500 17 12M20 21l-7-8" stroke="#a89868" strokeWidth="2.200" /><path d="M8.500 14l6-5M14 10.500l4 4" stroke="#aaa" strokeWidth="2.300" /></Tool>
      <Drop />
      <Tool dim><path d="M2.500 2.500h18v5h-18zM2.500 9.500h18v5h-18zM2.500 16.500h18v5h-18z" fill="#b5ab80" stroke="#8c8450" /><Pencil c="#a08070" /></Tool>
      <Tool dim><path d="M4 9h15l-1 13.500H5zM3 4.500h17V7H3z" fill="#9c4040" /><path d="M8 4V2.500h7V4M8 11.500v8M11.500 11.500v8M15 11.500v8" stroke="#5a2020" strokeWidth="1.300" /></Tool>
      <Tool dim><path d="M2.500 4.500 14.500 14.500M1.500 11.500l13-1" stroke="#bbb" strokeWidth="1.500" /><ellipse cx="18" cy="8.5" rx="3.200" ry="2.200" transform="rotate(-30 18 8.500)" stroke="#a04848" strokeWidth="1" /><ellipse cx="17.500" cy="16.500" rx="2.200" ry="3" stroke="#a04848" strokeWidth="1" /></Tool>
      <Tool dim><path d="M8 3h7l4 4v10H8z" fill="#888" stroke="#aaa" /><path d="M4 7h7l4 4v10.500H4z" fill="#bbb" stroke="#ddd" /><path d="M6 12.500h7M6 15h7M6 17.500h7M6 20h5" stroke="#555" /></Tool>
      <Tool dim><path d="M4 3h15v18.500H4z" fill="#999" stroke="#bba98a" /><path d="M7.500 1.500h8v3.500h-8z" fill="#aaa" stroke="#ccc" strokeWidth=".7" /><path d="M6.500 6h7.500l3 3v11H6.500z" fill="#ccc" /><path d="M8.500 10.500h6M8.500 13h6M8.500 15.500h6M8.500 18h4" stroke="#555" /></Tool>
      <Tool dim><path d="M3.500 10.500 9.500 4v4.500c6 0 11 2 11 7 0 4-2.500 6-6 6.200v-2.200c4-1.500 2-6-2-5.500-2 .3-3 1-3 3z" fill="#a07f70" stroke="#b89588" strokeWidth=".5" /></Tool>
      <Tool dim><path d="M20.500 10.500 14.500 4v4.500c-6 0-11 2-11 7 0 4 2.500 6 6 6.200v-2.200c-4-1.500-2-6 2-5.500 2 .3 3 1 3 3z" fill="#7f9a8c" stroke="#95b0a4" strokeWidth=".5" /></Tool>
      <Grip className="w-[30px] pl-[17px]" />
      <Tool><Tag /></Tool>
      <Tool size={46}><path d="M9 10 3.500 4a7.500 7.500 0 0 1 11-.3z" fill="#fcc800" stroke="#e08a00" strokeWidth=".6" /><path d="M9 10v7.500A7.500 7.500 0 0 1 3.500 4.500z" fill="#00a651" stroke="#064" strokeWidth=".6" /><path d="M9.500 9.500 15 4.200c3.500 4 2 10-2.500 11.800L9.500 17z" fill="#c01010" stroke="#700" strokeWidth=".6" /><path d="M10 17h4v7h-4z" fill="#fcc800" stroke="#e08a00" strokeWidth=".7" /><path d="M14.500 11h3v12.500h-3z" fill="#00a651" stroke="#064" strokeWidth=".7" /><path d="M18.500 18h3.500v5.500h-3.500z" fill="#c01010" stroke="#700" strokeWidth=".7" /></Tool>
      <div className="flex h-full w-[66px] shrink-0 items-center justify-center">
        <div className="ml-[3px] flex h-[41px] w-[48px] items-center justify-center border-[2px] border-[#1a6fe0] bg-[#66707e]"><I size={46}><Tag t="ab" /><Pin /></I></div>
      </div>
      <Tool dim><Tag t="ab" /><Pin /></Tool>
      <Tool dim><Tag /><ellipse cx="18" cy="18.5" rx="5.5" ry="4" fill="#999" /><circle cx="18" cy="18.5" r="2.8" fill="#222" /><circle cx="18" cy="18.5" r="1.1" fill="#ddd" /></Tool>
      <Tool dim><Tag /><rect x="13" y="13" width="10.5" height="10.5" rx="2" fill="#777" /><path d="M14.500 17h4v-2.500l4 4-4 4V20h-4z" fill="#ccc" /></Tool>
      <Tool dim><Tag /><rect x="13" y="13" width="10.5" height="10.5" rx="2" fill="#777" /><path d="M16 19a3 3 0 1 1 4 .5c-1 .5-2 1-1 3" stroke="#ccc" strokeWidth="1.500" /></Tool>
      <Tool dim><Tag /><rect x="13" y="13" width="10.5" height="10.5" rx="2" fill="#998c40" /><path d="M14.500 22l2-4.500 5-3.500-2 5z" fill="#ddd" /></Tool>
      <Grip className="w-[34px] pl-[19px]" />
      <Tool size={48}><g transform="translate(-.3 -1.500)"><Globe /></g><path d="M9.500 13.500h2l1 1.500 1-1.500h2l4.500 7.500-3.500 2-4-2.500-4 2.500L5 21z" fill="#000" /><circle cx="8" cy="20.5" r="3" fill="#263340" stroke="#000" strokeWidth="1.2" /><circle cx="17" cy="20.5" r="3" fill="#263340" stroke="#000" strokeWidth="1.2" /></Tool>
      <Grip className="w-[32px] pl-[17px]" />
      <Tool>
        <path d="M11.800 1.500c-4.500 0-4.800 1.500-4.800 3v2.500h5v1H4.700c-2.500 0-3.700 2-3.700 4.800s1.200 4.700 3.200 4.700h2v-3c0-2 1.500-3.200 3.500-3.200h4.500c1.700 0 2.800-1.200 2.800-2.800V4.500c0-2-1.700-3-5.200-3z" fill="#3877ab" />
        <path d="M12.200 22.500c4.500 0 4.800-1.500 4.800-3V17h-5v-1h7.300c2.500 0 2.900-2 2.900-4.500s-1-4.700-3-4.700h-1.700v3c0 2-1.500 3.200-3.500 3.200H9.500c-1.700 0-2.800 1.200-2.800 2.800v3.700c0 2 2 3 5.500 3z" fill="#fcd03c" />
        <circle cx="9" cy="4.3" r=".9" fill="#fff" /><circle cx="14.8" cy="19.7" r=".9" fill="#333" />
        <path d="M17.500 17l5 3-5 3" stroke="#777" strokeWidth="1.100" />
      </Tool>
      <Grip className="w-[32px] pl-[17px]" />
      <Tool><rect x="2.5" y="1.8" width="19" height="20.5" fill="#6d97c4" stroke="#14202c" strokeWidth=".8" /><path d="M2.800 2.200h4v19.700h-4z" fill="#35506c" /><path d="M7 2v20" stroke="#14202c" strokeWidth=".8" /><text x="10.8" y="17.5" fontSize="15" fontFamily="Liberation Serif, serif" fill="#fff">?</text></Tool>
      <Grip className="w-[32px] pl-[17px]" />
    </div>
  );
}

/* ------------------------------------------------------------------ */
/* Side panels                                                         */
/* ------------------------------------------------------------------ */

function DockTitle({ title }: { title: string }) {
  return (
    <div className="flex h-[34px] items-center justify-between pr-[3px] pl-[8px]">
      <span className="text-[22px] text-[#e4e4e4]">{title}</span>
      <div className="flex gap-[6px]">
        <svg className="h-[22px] w-[22px]" viewBox="0 0 22 22" fill="none" stroke="#85857f" strokeWidth="1.500"><rect x="1" y="1" width="20" height="20" /><path d="M8 8V5h9v9h-3M5 8h9v9H5z" /></svg>
        <svg className="h-[22px] w-[22px]" viewBox="0 0 22 22" fill="none" stroke="#85857f" strokeWidth="1.500"><rect x="1" y="1" width="20" height="20" /><path d="M5 5l12 12M17 5 5 17" strokeWidth="3" /></svg>
      </div>
    </div>
  );
}

const Folder = () => <path d="M2 3h9l2 2.500h9.500V21.500H2z" fill="#eee" stroke="#888" strokeWidth="1" />;
const Wire = ({ c = "#4a7ab0" }: { c?: string }) => (
  <g><circle cx="12" cy="12" r="11" stroke={c} strokeWidth="1" /><path d="M12 1v22M1 12h22M3.500 6.500h17M3.500 17.500h17" stroke={c} strokeWidth=".9" /><ellipse cx="12" cy="12" rx="6" ry="11" stroke={c} strokeWidth="1" /></g>
);
const MiniGlobe = () => (
  <g transform="translate(1 12) scale(.5)"><circle cx="12" cy="12" r="11.5" fill="#333" stroke="#ddd" strokeWidth="1.5" /><Land c="#eee" /></g>
);

const BROWSER: { label: string; arrow?: boolean; icon: React.ReactNode }[] = [
  { label: "Favorites", icon: <path d="M12 .8l2.900 7.600 8.300.3-6.500 5.100 2.300 8.300L12 17.500l-7 4.600 2.300-8.300L.8 8.700l8.300-.3z" fill="#fff35c" stroke="#d6ac00" strokeWidth="1" /> },
  { label: "Home", arrow: true, icon: <><Folder /><path d="M6.500 13.500 12 8.500l5.500 5M8.500 12.500V18h7v-5.500" stroke="#222" strokeWidth="1.300" /></> },
  { label: "/", arrow: true, icon: <Folder /> },
  { label: "/Volumes", arrow: true, icon: <Folder /> },
  { label: "GeoPackage", icon: <Box /> },
  { label: "SpatiaLite", icon: <Feather /> },
  { label: "PostGIS", icon: <><path d="M1 4c1-3 5-3.300 8-2 3-1.500 6-1.300 7.500-.5 3-1 6.500 0 6.500 3.500 0 4-2 8-3.500 9.500 1.500 1 3 .5 3.500.3-1 2-3.500 2.200-5 1.700 0 3.500 0 6.500-3.500 6.500-3 0-3-3.500-3-7-1 1-1.500 1.200-3 1C4 16.500.3 8 1 4z" fill="#6d97c4" /><path d="M9 2C6.500 6 8 12 8.500 14.500M16.500 1.500c2 3.500 1.500 7 0 9.500s1 3 2 3.500M11.500 15.500c.5-3-1-3-.5-6.500" stroke="#335d88" strokeWidth="1" /></> },
  { label: "MSSQL", icon: <><path d="M1 1c6 0 16 .5 22 8.500C16 14 6 14 1 22.500 6 14 5.500 7 1 1z" fill="#6d97c4" stroke="#41719f" strokeWidth=".7" /><path d="M6.500 1.500c4 5 4 10 1.500 14M12 2.500c3 4 3.500 7.500 1.500 11M17 5c1.500 2.500 2 4.500 1 7" stroke="#244a70" strokeWidth="1.200" /></> },
  { label: "DB2", icon: <><rect x="0" y=".5" width="24" height="23" rx="2.5" fill="#6d97c4" /><text x="1.7" y="15" fontSize="8.8" fill="#fff" fontFamily="Open Sans, sans-serif" textLength="20.5" lengthAdjust="spacingAndGlyphs">DB2</text></> },
  { label: "WMS/WMTS", icon: <Globe /> },
  { label: "XYZ Tiles", arrow: true, icon: <Globe /> },
  { label: "WCS", icon: <><circle cx="12" cy="12" r="11" fill="#6d97c4" stroke="#2c5377" strokeWidth=".8" /><path d="M3.500 6.500h17c1 1.500 2 3.500 2 5.500h-21c0-2 1-4 2-5.500z" fill="#2c5377" /><path d="M1 12h22M3.500 6.500h17M3.500 17.500h17" stroke="#fff" strokeWidth="1.200" /><ellipse cx="12" cy="12" rx="6" ry="10.5" stroke="#fff" strokeWidth="1.2" /></> },
  { label: "WFS", icon: <><Wire /><g fill="#fff"><circle cx="6" cy="6.5" r=".9" /><circle cx="14.5" cy="6.5" r=".9" /><circle cx="19" cy="6.5" r=".9" /><circle cx="10" cy="18.5" r=".9" /></g></> },
  { label: "OWS", icon: <Wire /> },
  { label: "ArcGisMapServer", icon: <><Globe /><MiniGlobe /></> },
  { label: "ArcGisFeatureServer", icon: <><Wire /><MiniGlobe /></> },
  { label: "GeoNode", icon: <>{[0, 60, 120].map((a) => <path key={a} transform={`rotate(${a} 12 12)`} d="M12 2.300v19.400" stroke="#6d97c4" strokeWidth="3.400" strokeLinecap="round" strokeDasharray="6 7.400" />)}<circle cx="12" cy="12" r="3" fill="#4a7ab0" /></> },
];

const CheckMark = () => (
  <svg className="h-[22px] w-[20px]" viewBox="0 0 20 22" fill="none"><path d="M3 11.500 7.500 19 17 3" stroke="#ddd" strokeWidth="2.600" /></svg>
);
const CheckBox = ({ className = "" }: { className?: string }) => (
  <div className={"flex h-[28px] w-[28px] shrink-0 items-center justify-center border-2 border-[#282828] bg-[#1c1c1c] " + className}><CheckMark /></div>
);

const CLASSES = [
  { label: "1.0000 - 1440.0000", box: "bg-white border-y-[#b2b2b2]" },
  { label: "1440.0000 - 2879.0000", box: "bg-[#ffbfbf] border-y-[#b28585]" },
  { label: "2879.0000 - 4318.0000", box: "bg-[#ff8080] border-y-[#b25959]" },
  { label: "4318.0000 - 5757.0000", box: "bg-[#ff4040] border-y-[#b22c2c]" },
  { label: "5757.0000 - 7196.0000", box: "bg-[#ff0000] border-y-[#b20000]" },
];

function Sidebar() {
  return (
    <div className="flex w-[587px] shrink-0 flex-col bg-[#323232]">
      <div className="pt-[3px]"><DockTitle title="Browser" /></div>
      <div className="flex h-[64px] items-center gap-[22px] pl-[18px]">
        <I size={28}><path d="M1.500 1.500h18.500v18.500H1.500z" fill="#eee" stroke="#aaa" /><PlusBadge /></I>
        <I size={28}><Refresh /></I>
        <I size={28}><Funnel /></I>
        <I size={29}><Tree up /></I>
        <I size={28}><Info /></I>
      </div>
      <div className="h-[755px] border-2 border-[#292929] bg-[#1e1e1e]">
        {BROWSER.map((b) => (
          <div key={b.label} className="flex h-[36px] items-center">
            <div className="w-[46px] pl-[16px]">
              {b.arrow && <div className="h-0 w-0 border-y-[8px] border-l-[8px] border-y-transparent border-l-[#aaa]" />}
            </div>
            <I size={32}>{b.icon}</I>
            <span className="ml-[12px] text-[25px] font-medium tracking-[0.1px] whitespace-pre text-white">{b.label}</span>
          </div>
        ))}
      </div>
      <div className="flex h-[17px] items-center justify-center gap-[2px] pl-[8px]">
        {GRIP_ROWS.map((i) => <span key={i} className="h-[4px] w-[4px] bg-[#858585]" />)}
      </div>
      <DockTitle title="Layers" />
      <div className="flex h-[65px] items-center pl-[17px]">
        <I size={30}><path d="M5 2.500l9 2.500-4 16L.5 16z" fill="#e03030" /><path d="M5 2.500 14 5l-1 4-9.500-3z" fill="#fce94f" /><path d="M3.500 6 13 9l-1 4-9.800-3z" fill="#4a7fc0" /><path d="M9 12l4-3 6 5.500-5 8-9-4z" fill="#e8b76a" stroke="#b98530" strokeWidth=".6" /><path d="M14.500 11.500 22.500 3" stroke="#d89a3c" strokeWidth="2.600" /></I>
        <div className="ml-[20px]"><I size={30}><path d="M4 8v14h8M7 4.500h12v13H7z" stroke="#ccc" strokeWidth="1.200" /><path d="M8.500 3H20v13H8.500z" fill="#e8e8e8" stroke="#aaa" /><path d="M12 14V4q0-3 2.200-3T16.400 4v10q0 2-1.200 2T14 14V6" stroke="#4a77a8" strokeWidth="1.100" /><PlusBadge /></I></div>
        <div className="ml-[19px]"><I size={34}><path d="M1 12C6 6 17 5 22 12c-5 6-15 6-21 0z" fill="#eee" /><path d="M1 8C7 2.500 17 2.500 22 8M1 12C6 6 17 5 22 12" stroke="#777" strokeWidth="1.100" /><circle cx="11.5" cy="11.5" r="5" fill="#6d97c4" /><circle cx="11.5" cy="11.5" r="2.2" fill="#111" /><path d="M16 19h8l-4 4z" fill="#bbb" /></I></div>
        <div className="ml-[17px]"><I size={30}><Funnel /></I></div>
        <div className="ml-[20px]"><I size={32}><text x="2" y="12.5" fontSize="18" fontFamily="Liberation Serif, serif" fill="#71357d">ε</text><path d="M13 13h10v10H13z" fill="#aaa" /><path d="M14.500 14.500h7L19 18v4l-2 .5V18z" fill="#fff" /></I></div>
        <div className="ml-[11px] h-0 w-0 border-x-[7px] border-t-[8px] border-x-transparent border-t-[#aaa]" />
        <div className="ml-[17px]"><I size={32}><Tree /></I></div>
        <div className="ml-[18px]"><I size={32}><Tree up /></I></div>
        <div className="ml-[19px]"><I size={30}><path d="M1.500 1.500h18.500v18.500H1.500z" fill="#eee" stroke="#aaa" /><rect x="14" y="14" width="9" height="9" rx="1.5" fill="#ef4040" /><path d="M15.800 18.500h5.400" stroke="#fff" strokeWidth="1.800" /></I></div>
      </div>
      <div className="flex-1 border-2 border-b-0 border-[#292929] bg-[#1e1e1e]">
        <div className="flex h-[36px] items-center bg-[#464646]">
          <div className="ml-[12px] h-0 w-0 border-x-[8px] border-t-[8px] border-x-transparent border-t-[#aaa]" />
          <CheckBox className="ml-[18px]" />
          <div className="ml-[12px]"><I size={32}><path d="M1 7C.5 3 3 1.500 6.500 3c4 2 7 1.500 10-.3 4-2 6 .3 5.800 5.300v5c0 5-2.500 6-5.500 4.500-3.500-1.800-6-1.300-9 1-3.500 3-6.300 1.500-6-3z" fill="#9aa9b8" stroke="#7d8a98" strokeWidth="1" /></I></div>
          <span className="ml-[12px] border-b-[3px] border-white text-[25px] leading-[27px] font-bold tracking-[0.36px] whitespace-pre text-white">density ./exercises/analysis/den...</span>
        </div>
        {CLASSES.map((c) => (
          <div key={c.label} className="flex h-[36px] items-center">
            <CheckBox className="ml-[86px]" />
            <div className={"ml-[12px] h-[36px] w-[36px] border-x border-y-2 border-x-[#00000040] " + c.box} />
            <span className="ml-[12px] text-[25px] font-medium tracking-[0.54px] whitespace-pre text-white">{c.label}</span>
          </div>
        ))}
      </div>
    </div>
  );
}

/* ------------------------------------------------------------------ */
/* Status bar                                                          */
/* ------------------------------------------------------------------ */

const Spin = () => (
  <div className="flex h-full w-[28px] flex-col items-center justify-center gap-[12px] rounded-r-[4px] border-2 border-l-0 border-[#555] bg-[#3f3f3f]">
    <span className="h-0 w-0 border-x-[8px] border-b-[8px] border-x-transparent border-b-[#b4b4b4]" />
    <span className="h-0 w-0 border-x-[8px] border-t-[8px] border-x-transparent border-t-[#b4b4b4]" />
  </div>
);

function StatusBar() {
  return (
    <div className="flex h-[62px] items-center border-t border-[#222] bg-[#323232] pt-[3px] text-[22px] font-medium text-white">
      <div className="ml-[9px] flex h-[48px] w-[431px] shrink-0 items-center rounded-[5px] border-2 border-[#272727] bg-[#1e1e1e] text-[25px] font-normal text-[#9a9a9a]">
        <svg className="ml-[13px] h-[28px] w-[28px]" viewBox="0 0 24 24" fill="none" stroke="#9a9a9a" strokeWidth="1.700"><circle cx="10" cy="10" r="7.5" /><path d="M15.500 15.500 22.500 22.500" strokeWidth="2.200" /></svg>
        <span className="ml-[14px] whitespace-pre">Type to locate (⌘K)</span>
      </div>
      <span className="ml-[16px] w-[732px] shrink-0 text-[22px] font-normal text-black">Ready</span>
      <span className="w-[122px] shrink-0">Coordinate</span>
      <div className="flex h-[44px] w-[221px] shrink-0 items-center justify-center rounded-[5px] border-2 border-[#272727] bg-[#1e1e1e] text-[22.7px]">236543,4212740</div>
      <svg className="ml-[10px] h-[36px] w-[34px] shrink-0" viewBox="0 0 34 36"><path d="M5 7c0-5 6-6 9-2l10 14c6 8 2 14-4 13S9 26 7 19z" fill="#b8b0b0" /><path d="M4 7c0-5 6-6 9-2l9 13c5 8 2 13-4 13S9 25 7 18z" fill="#fff" stroke="#000" strokeWidth="2" /><path d="M9 8l3 8c1 2 4 1 3-1l-4-8" fill="none" stroke="#000" strokeWidth="1.800" /><circle cx="17" cy="25" r="3.500" stroke="#000" strokeWidth="2" fill="#fff" /><path d="M22 7l2-2M26 11l3-1M28 4l2-2M3 26l2-1" stroke="#000" strokeWidth="2" /></svg>
      <span className="ml-[23px] w-[65px] shrink-0">Scale</span>
      <div className="flex h-[48px] w-[186px] shrink-0 items-stretch rounded-[5px] border-2 border-[#272727] bg-[#1e1e1e] text-[22.7px]">
        <span className="flex flex-1 items-center pl-[5px]">1:171369</span>
        <div className="flex w-[40px] items-center justify-center rounded-r-[4px] border-2 border-l-0 border-[#606060] bg-[#464646]"><span className="h-0 w-0 border-x-[8px] border-t-[8px] border-x-transparent border-t-[#1c1c1c]" /></div>
      </div>
      <svg className="ml-[22px] h-[32px] w-[26px] shrink-0" viewBox="0 0 26 32"><path d="M5 15V9c0-10 16-10 16 0v6" fill="none" stroke="#aaaaa5" strokeWidth="3.500" /><rect x="1" y="14" width="24" height="17" rx="2" fill="#686868" /></svg>
      <span className="ml-[18px] w-[106px] shrink-0">Magnifier</span>
      <div className="flex h-[46px] w-[194px] shrink-0 items-stretch rounded-[5px] border-2 border-[#272727] bg-[#1e1e1e]"><span className="flex flex-1 items-center pl-[6px]">100%</span><Spin /></div>
      <span className="ml-[17px] w-[107px] shrink-0">Rotation</span>
      <div className="flex h-[46px] w-[186px] shrink-0 items-stretch rounded-[5px] border-2 border-[#272727] bg-[#1e1e1e]"><span className="flex flex-1 items-center pl-[8px]">0.0 °</span><Spin /></div>
      <CheckBox className="ml-[11px]" />
      <span className="ml-[11px] w-[105px] shrink-0 font-normal">Render</span>
      <svg className="h-[30px] w-[32px] shrink-0" viewBox="0 0 24 24" fill="none"><path d="M1 10 5 4l7-3 7 3 4 6-2 4-3 6-4 3H9l-3-3-2-6z" fill="#b4b4b4" /><path d="M2 9.500h20M4 15h16M5 5h14M12 1v22M8 2C5 9 7 17 9 23M16 2c3 7 1 15-1 21" stroke="#444" strokeWidth=".9" /></svg>
      <span className="ml-[4px] w-[177px] shrink-0 text-[23px] font-normal tracking-[-0.2px]">EPSG:26913</span>
      <svg className="h-[34px] w-[34px] shrink-0" viewBox="0 0 34 34"><path d="M16 1c9 0 16 6 16 14 0 5-2 8-4 10 0 3 1 5 3 8-5 0-8-2-9-4-12 3-21-4-21-14C1 7 7 1 16 1z" fill="#6e6e6e" /><g fill="#fff"><circle cx="9" cy="15" r="2.2" /><circle cx="16" cy="15" r="2.2" /><circle cx="23" cy="15" r="2.2" /></g></svg>
    </div>
  );
}

export default function App() {
  return (
    <div className="flex h-[1912px] w-[2940px] flex-col overflow-hidden bg-[#323232] font-['Inter','Noto_Sans',sans-serif]">
      <div className="h-[72px] shrink-0 bg-black" />
      <ToolbarTop />
      <ToolbarEdit />
      <div className="flex h-[1623px] shrink-0">
        <Sidebar />
        <div className="flex w-[15px] shrink-0 flex-col items-end justify-center gap-[3px] border-r border-[#222] pt-[4px] pr-[3px]">
          {GRIP_ROWS.map((i) => <span key={i} className="h-[3px] w-[4px] bg-[#777]" />)}
        </div>
        <div className="mt-[3px] h-[1620px] w-[2336px] bg-white"><MapCanvas /></div>
      </div>
      <StatusBar />
    </div>
  );
}
